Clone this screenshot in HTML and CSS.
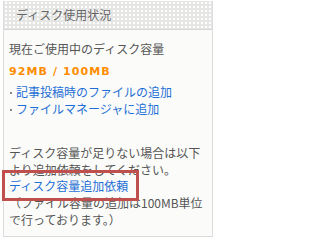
FILE: index.html
```html
<!DOCTYPE html>
<html lang="ja">
<head>
<meta charset="utf-8">
<link rel="stylesheet" href="styles.css">
</head>
<body>
<div class="panel">
  <div class="panel-head">ディスク使用状況</div>
  <div class="panel-body">
    <p class="label">現在ご使用中のディスク容量</p>
    <p class="usage">92MB / 100MB</p>
    <ul class="links">
      <li><a href="#">記事投稿時のファイルの追加</a></li>
      <li><a href="#">ファイルマネージャに追加</a></li>
    </ul>
    <p class="note">ディスク容量が足りない場合は以下より追加依頼をしてください。<br><a href="#" class="request">ディスク容量追加依頼</a><br>（ファイル容量の追加は100MB単位で行っております。）</p>
  </div>
  <div class="highlight"></div>
</div>
</body>
</html>
```
FILE: styles.css
```css
html, body {
  margin: 0;
  padding: 0;
  background: #ffffff;
}
body {
  font-family: "Noto Sans CJK JP", "Liberation Sans", sans-serif;
  font-size: 12px;
  color: #555555;
}
.panel {
  position: relative;
  margin: 1px 0 0 3px;
  width: 210px;
  height: 236px;
  box-sizing: border-box;
  border: 1px solid #dcdcdc;
  border-top: none;
  background: #fbfcfa;
}
.panel-head {
  height: 28px;
  line-height: 28px;
  padding-left: 12px;
  color: #666666;
  background-color: #e6e7e5;
  background-image: radial-gradient(circle, #ffffff 0.8px, transparent 1px);
  background-size: 4px 4px;
  background-position: 0 0;
  border-bottom: 1px solid #d6d6d6;
}
.panel-body {
  padding: 11px 5px 0 5px;
  line-height: 16.7px;
}
.label {
  margin: 0;
  color: #555555;
}
.usage {
  margin: 6px 0 0 0;
  color: #ff8c00;
  font-weight: bold;
  font-family: "DejaVu Sans", "Liberation Sans", sans-serif;
  font-size: 11px;
  letter-spacing: 1.1px;
}
.links {
  list-style: none;
  margin: 4px 0 0 0;
  padding: 0;
}
.links li {
  padding-left: 7px;
  position: relative;
}
.links li::before {
  content: "";
  position: absolute;
  left: 1px;
  top: 8px;
  width: 2px;
  height: 2px;
  background: #888888;
}
a {
  color: #1f6fd6;
  text-decoration: none;
}
.note {
  margin: 27px 0 0 0;
  color: #555555;
}
.highlight {
  position: absolute;
  left: -2px;
  top: 169px;
  width: 137px;
  height: 31px;
  box-sizing: border-box;
  border: 3px solid #c0504d;
}
```
